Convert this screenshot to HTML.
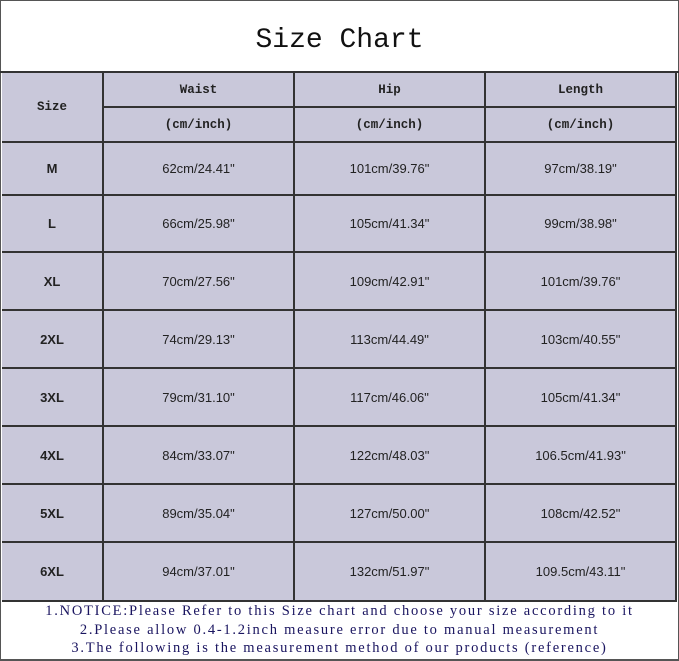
<!DOCTYPE html>
<html><head><style>
body{margin:0;width:679px;height:661px;background:#fff;position:relative;overflow:hidden;font-family:"Liberation Sans",sans-serif}
.a{position:absolute;box-sizing:border-box}
.c{display:flex;align-items:center;justify-content:center;background:#c9c8da;color:#222;font-size:13px;border-right:2px solid #333;border-bottom:2px solid #333}
.h{font-family:"Liberation Mono",monospace;font-weight:bold;font-size:12.5px}
.s{font-weight:bold;font-size:13px}
</style></head><body>
<div class="a" style="left:0;top:0;width:679px;height:661px;border:1px solid #555;border-bottom:2px solid #555"></div>
<div class="a" style="left:0;top:25px;width:679px;text-align:center;font-family:'Liberation Mono',monospace;font-size:28px;color:#111">Size Chart</div>
<div class="a" style="left:0;top:71px;width:679px;height:2px;background:#333"></div>
<div id="t"></div>
<div class="a" style="left:0;top:602px;width:679px;text-align:center;font-family:'Liberation Serif','Noto Serif CJK SC',serif;font-size:14.5px;line-height:18.5px;color:#1a1560;letter-spacing:1.75px;white-space:nowrap">1.NOTICE:Please Refer to this Size chart and choose your size according to it<br>2.Please allow 0.4-1.2inch measure error due to manual measurement<br>3.The following is the measurement method of our products (reference)</div>
<script>
var t=document.getElementById('t'),h='';
var X=[2,104,295,486,677];
function cell(x,y,w,hh,txt,cls){h+='<div class="a c '+(cls||'')+'" style="left:'+x+'px;top:'+y+'px;width:'+w+'px;height:'+hh+'px">'+txt+'</div>';}
cell(2,73,102,70,'Size','h');
var hd=['Waist','Hip','Length'];
for(var i=0;i<3;i++){cell(X[i+1],73,X[i+2]-X[i+1],35,hd[i],'h');cell(X[i+1],108,X[i+2]-X[i+1],35,'(cm/inch)','h');}
var Y=[143,196,253,311,369,427,485,543,602];
var d=[['M','62cm/24.41"','101cm/39.76"','97cm/38.19"'],['L','66cm/25.98"','105cm/41.34"','99cm/38.98"'],['XL','70cm/27.56"','109cm/42.91"','101cm/39.76"'],['2XL','74cm/29.13"','113cm/44.49"','103cm/40.55"'],['3XL','79cm/31.10"','117cm/46.06"','105cm/41.34"'],['4XL','84cm/33.07"','122cm/48.03"','106.5cm/41.93"'],['5XL','89cm/35.04"','127cm/50.00"','108cm/42.52"'],['6XL','94cm/37.01"','132cm/51.97"','109.5cm/43.11"']];
for(var r=0;r<8;r++)for(var c=0;c<4;c++)cell(X[c],Y[r],X[c+1]-X[c],Y[r+1]-Y[r],d[r][c],c==0?'s':'');
t.innerHTML=h;
</script>
</body></html>
